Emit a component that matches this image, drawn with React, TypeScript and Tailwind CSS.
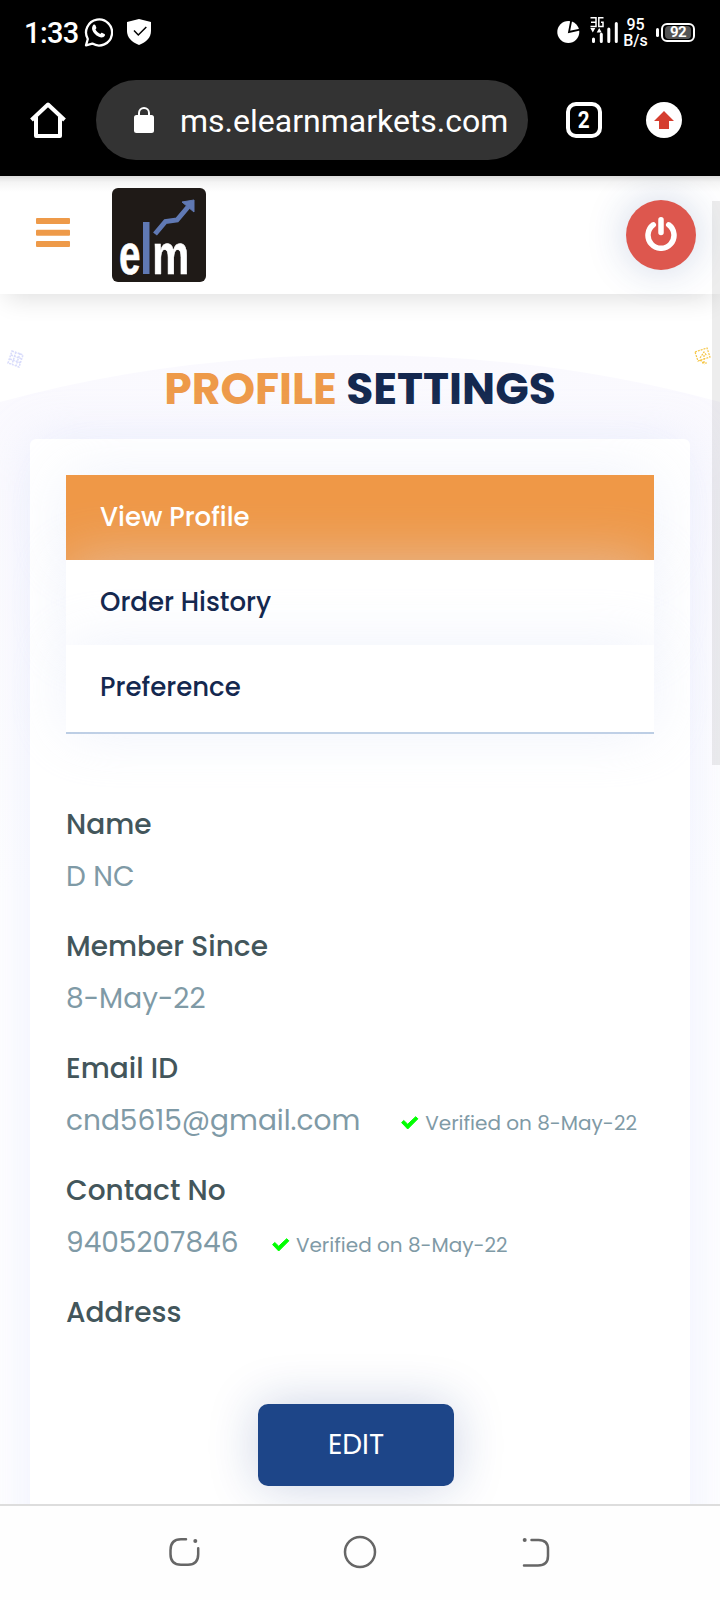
function StatusBar() {
  return (
    <div className="flex h-16 items-center justify-between pl-6 pr-[25px] font-['Roboto',sans-serif] text-white">
      <div className="flex items-center">
        <span className="w-[60px] pt-[3px] whitespace-nowrap text-[29px] leading-none font-medium tracking-[-0.6px]">1:33</span>
        <svg className="h-[30px] w-[29px]" viewBox="0 0 29 30" fill="none">
          <path d="M2 28.3 3.8 22A13 13 0 1 1 8.3 26.6Z" stroke="#fff" strokeWidth="2.3" strokeLinejoin="round" />
          <path d="M9.2 8c.8-.8 1.9-.5 2.2.3l.9 2.1c.2.6-.2 1.2-.9 1.9.9 2 2.7 3.8 4.9 4.7.9-.9 1.3-1.4 2-1.1l2.2 1.1c.8.4.6 1.5-.1 2.3-1.4 1.5-3.5 1.4-5.5.5-3.4-1.5-5.7-4.1-6.6-6.7-.6-2 0-4.2.9-5.1Z" fill="#fff" />
        </svg>
        <svg className="ml-[14px] h-[26px] w-6" viewBox="0 0 24 26" fill="none">
          <path d="M12 0 24 3v9c0 6.5-4.5 11-12 14C4.5 23 0 18.5 0 12V3Z" fill="#fff" />
          <path d="m7 11.5 4.3 4.5 8-8" stroke="#000" strokeWidth="1.5" />
        </svg>
      </div>
      <div className="flex items-center">
        <svg className="h-[26px] w-[61px] overflow-visible" viewBox="0 0 61 26" fill="none">
          <circle cx="11.3" cy="13" r="11" fill="#fff" />
          <path d="M14.5 0 12 13 24 10.3" stroke="#000" strokeWidth="1.8" />
          <path d="M33.5-1.2H39V7.5H33.5M34 3.2H39M46.5-1.2H41.8V7.5H46V3.2H44" stroke="#fff" strokeWidth="1.5" />
          <path d="M33.3 9h5l-2.5 4.5zM39.7 13.5l2.5-4.5 2.5 4.5z" fill="#fff" />
          <path d="M36.5 20v2.5M44.3 15.2v7.3M51.8 10v12.5M59.3 4.5v18" stroke="#fff" strokeWidth="3" strokeLinecap="round" />
        </svg>
        <div className="ml-[2px] flex w-[31px] flex-col items-center pt-px text-[16px] leading-4 font-medium">
          <span>95</span>
          <span>B/s</span>
        </div>
        <div className="ml-[5px] h-[9px] w-[3px] rounded bg-white" />
        <div className="ml-[2px] flex h-[19px] w-[34px] items-center justify-center rounded-[6px] border-2 border-white p-[2px]">
          <div className="flex h-[13px] w-full items-center justify-center rounded-sm bg-[#555] text-[15px] leading-none font-bold tracking-[-0.5px]">92</div>
        </div>
      </div>
    </div>
  );
}

function BrowserBar() {
  return (
    <div className="flex h-28 items-start pt-4 pl-[30px] font-['Roboto',sans-serif] text-white">
      <svg className="mt-[22px] h-9 w-9" viewBox="0 0 36 36" fill="none">
        <path d="M1.5 18 18 2.5 34.5 18M6 15v19h24V15" stroke="#fff" strokeWidth="4" strokeLinejoin="round" />
      </svg>
      <div className="ml-[30px] flex h-20 w-[432px] items-center rounded-full bg-[#333] pl-[38px]">
        <svg className="h-[26px] w-5" viewBox="0 0 20 26" fill="none">
          <rect y="8" width="20" height="18" rx="2.5" fill="#fff" />
          <path d="M5 9V6a5 5 0 0 1 10 0v3" stroke="#fff" strokeWidth="2" />
        </svg>
        <span className="ml-[26px] pt-[2px] text-[32px] leading-none whitespace-nowrap">ms.elearnmarkets.com</span>
      </div>
      <div className="mt-[22px] ml-[38px] flex h-9 w-9 items-center justify-center rounded-[10px] border-4 border-white pt-px text-[23px] leading-none font-bold">
        <span className="scale-x-90">2</span>
      </div>
      <svg className="mt-[22px] ml-11 h-9 w-9" viewBox="0 0 36 36">
        <circle cx="18" cy="18" r="18" fill="#fff" />
        <path d="M18 9 28 19h-5v8H13v-8H8Z" fill="#d53d2f" />
      </svg>
    </div>
  );
}

function Logo() {
  return (
    <svg className="h-[94px] w-[94px] overflow-visible" viewBox="0 0 94 94">
      <rect width="94" height="94" rx="6" fill="#1f1a17" />
      <g fill="#fff" stroke="#fff" strokeWidth="0.7" className="font-['Liberation_Sans_Narrow','Liberation_Sans',sans-serif] text-[57px] font-bold">
        <text x="7" y="86" textLength="21.5" lengthAdjust="spacingAndGlyphs">e</text>
        <text x="40.3" y="86" textLength="37" lengthAdjust="spacingAndGlyphs">m</text>
      </g>
      <rect x="31" y="34" width="6.5" height="52" fill="#6079b4" />
      <path d="M43 46 53.5 33.5 65 32 76 19" fill="none" stroke="#6079b4" strokeWidth="5" />
      <path d="M70 14 82 12v12Z" fill="#6079b4" stroke="#6079b4" />
    </svg>
  );
}

function SiteHeader() {
  return (
    <header className="flex h-[118px] items-center bg-white bg-[linear-gradient(#dcdcdc,#f4f4f4_6px,#fff_16px)] pr-6 pl-9 shadow-[0_9px_25px_-6px_rgba(0,0,0,0.14)]">
      <svg className="-mt-[5px] h-[29px] w-[34px]" viewBox="0 0 34 29" fill="#ee9a49">
        <rect width="34" height="6" rx="1" />
        <rect y="11.7" width="34" height="6" rx="1" />
        <rect y="23" width="34" height="6" rx="1" />
      </svg>
      <div className="ml-[42px]"><Logo /></div>
      <div className="ml-auto flex h-[70px] w-[70px] items-center justify-center rounded-full bg-[#dd574e] shadow-[0_0_40px_rgba(30,70,140,0.22)]">
        <svg className="-mt-[3px] h-[34px] w-8" viewBox="0 0 32 34" fill="none" stroke="#fff" strokeWidth="5.5" strokeLinecap="round">
          <path d="M8.3 7.8A13 13 0 1 0 23.7 7.8M16 2.8V15.5" />
        </svg>
      </div>
    </header>
  );
}

function Verified({ className }: { className: string }) {
  return (
    <span className={`flex items-center pt-[4px] ${className}`}>
      <svg className="h-[14px] w-[18px]" viewBox="0 0 18 14" fill="#0f0" stroke="#0f0" strokeWidth="1" strokeLinejoin="round">
        <path d="M.6 6.6 2.8 4.5 6.7 8.2 14.7.7 16.9 2.8 6.7 13Z" />
      </svg>
      <span className="ml-[6px] text-[20px]">Verified on 8-May-22</span>
    </span>
  );
}

const tabs = [
  { label: "View Profile", style: "h-[85px] bg-[#ef9847] text-white" },
  { label: "Order History", style: "h-[85px] bg-white text-[#14284f]" },
  { label: "Preference", style: "h-[87px] bg-white text-[#14284f]" },
];

const fields = [
  { label: "Name", value: "D NC", verified: "" },
  { label: "Member Since", value: "8-May-22", verified: "" },
  { label: "Email ID", value: "cnd5615@gmail.com", verified: "ml-[41px]" },
  { label: "Contact No", value: "9405207846", verified: "ml-[33.5px]" },
  { label: "Address", value: "", verified: "" },
];

function Page() {
  return (
    <main className="relative h-[1210px] overflow-hidden bg-white">
      <svg className="absolute inset-0 h-[1210px] w-[720px]" viewBox="0 0 720 1210" fill="none">
        <defs>
          <linearGradient id="hill" x1="0" y1="61" x2="0" y2="600" gradientUnits="userSpaceOnUse">
            <stop stopColor="#faf9fe" />
            <stop offset="1" stopColor="#fefeff" />
          </linearGradient>
        </defs>
        <path d="M0 108Q170 61 360 61T720 108V1210H0Z" fill="url(#hill)" />
        <g stroke="#d9dcfb" strokeWidth="1.5" strokeDasharray="2 1">
          <path d="m12 57 11 4-4 12-11-4zM11 61l11 4M10 65l11 4M16 58l-4 12M20 59l-4 13" />
        </g>
        <g stroke="#f5c543" strokeWidth="1.2" strokeDasharray="2 1">
          <path d="m695 58 12-4 3 9-12 4zM700 64l4-6 3 4M700 66l5 4M704 61v8M702 69h6" />
        </g>
      </svg>
      <h1 className="relative pt-[68px] text-center text-[44px] leading-[54px] font-bold whitespace-nowrap text-[#14284f]">
        <span className="text-[#ee9a49]">PROFILE</span> SETTINGS
      </h1>
      <section className="relative mx-[30px] mt-[23px] h-[1200px] rounded-md bg-white px-9 pt-9 shadow-[0_0_50px_rgba(215,222,250,0.42)]">
        <nav className="border-b-2 border-[#b8cbe2]">
          {tabs.map((tab) => (
            <div
              key={tab.label}
              className={`pl-[34px] text-[26px] leading-[85px] font-medium shadow-[0_0_60px_rgba(222,227,247,0.48)] ${tab.style}`}
            >
              {tab.label}
            </div>
          ))}
        </nav>
        <dl className="pt-[67px] text-[28px] text-[#7f9aa6]">
          {fields.map((f) => (
            <div key={f.label} className="h-[122px]">
              <dt className="flex h-12 items-center font-medium text-[#43565b]">{f.label}</dt>
              <dd className="flex h-14 items-center whitespace-nowrap">
                <span>{f.value}</span>
                {f.verified && <Verified className={f.verified} />}
              </dd>
            </div>
          ))}
        </dl>
        <div className="absolute top-[965px] left-[228px] flex h-[82px] w-[196px] items-center justify-center rounded-[10px] bg-[#1d4588] text-[28px] text-white shadow-[0_0_50px_rgba(20,50,130,0.22)]">
          EDIT
        </div>
      </section>
    </main>
  );
}

function NavBar() {
  return (
    <div className="h-24 border-t-2 border-[#ddd] bg-[#fefefe]">
      <svg className="h-[94px] w-[720px]" viewBox="0 1506 720 94" fill="none" stroke="#666" strokeWidth="2.5" strokeLinecap="round">
        <path d="M186 1539.3h-5q-10.500 0-10.500 11v4q0 10.500 10.500 10.500h7q10.200 0 10.200-10.500v-6" />
        <circle cx="360" cy="1552" r="15" />
        <path d="M531.5 1540h7q9.500 0 9.500 9v7q0 9.500-10 9.500h-14" />
        <g fill="#666" stroke="none">
          <circle cx="195.3" cy="1541" r="2" />
          <circle cx="524.7" cy="1540" r="2" />
        </g>
      </svg>
    </div>
  );
}

export default function App() {
  return (
    <div className="relative h-[1600px] w-[720px] overflow-hidden bg-white font-['Poppins','Inter',sans-serif]">
      <div className="bg-black">
        <StatusBar />
        <BrowserBar />
      </div>
      <div className="relative z-10"><SiteHeader /></div>
      <Page />
      <div className="absolute top-[201px] right-0 z-20 h-[564px] w-2 bg-black/7" />
      <div className="relative"><NavBar /></div>
    </div>
  );
}
